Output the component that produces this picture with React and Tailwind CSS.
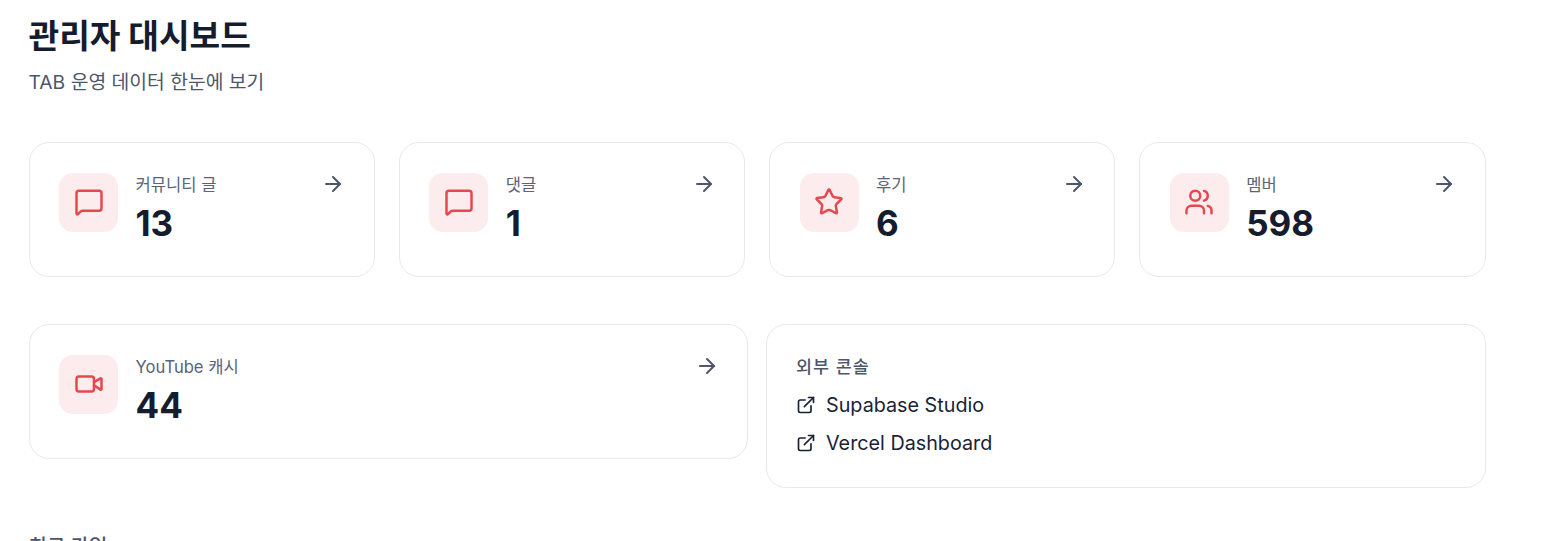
import React from "react";
import { MessageSquare, Star, Users, Video, ArrowRight, ExternalLink } from "lucide-react";

const font = "font-['Inter','Noto_Sans_CJK_KR',sans-serif]";

function Stat({ icon: Icon, label, value }) {
  return (
    <div className="h-[135px] rounded-[20px] border border-[#e8e8f0] bg-white pl-[29.5px] pr-[28.5px] pt-[30px] flex items-start gap-[17.5px]">
      <div className="w-[59px] h-[59px] rounded-[14px] bg-[#fcecee] flex items-center justify-center shrink-0">
        <Icon size={30} strokeWidth={2} className="text-[#e5484d] -mt-[1px]" />
      </div>
      <div className="flex-1 min-w-0">
        <div className="text-[16.6px] leading-[24px] text-[#5a6478]">{label}</div>
        <div className="text-[35px] leading-[44px] font-bold text-[#141c2e] mt-[4px]">{value}</div>
      </div>
      <ArrowRight size={24} strokeWidth={2} className="text-[#4d566b] shrink-0 -mt-[1px]" />
    </div>
  );
}

function Ext({ label }) {
  return (
    <div className="flex items-center gap-[10px] text-[19.75px] leading-[28px] text-[#1a2236]">
      <ExternalLink size={20} strokeWidth={2} className="shrink-0 -mt-[1px]" />
      <span>{label}</span>
    </div>
  );
}

export default function App() {
  return (
    <div className={"h-[541px] overflow-hidden bg-white pl-[28.5px] w-[1485.5px] " + font}>
      <h1 className="text-[33.3px] leading-[44px] font-bold text-[#141c2e] pt-[14px] box-content">관리자 대시보드</h1>
      <p className="text-[19.3px] leading-[28px] text-[#4d566b] mt-[10px]">TAB 운영 데이터 한눈에 보기</p>
      <div className="grid grid-cols-4 gap-[24px] mt-[46px]">
        <Stat icon={MessageSquare} label="커뮤니티 글" value="13" />
        <Stat icon={MessageSquare} label="댓글" value="1" />
        <Stat icon={Star} label="후기" value="6" />
        <Stat icon={Users} label="멤버" value="598" />
      </div>
      <div className="grid grid-cols-[719.5px_1fr] gap-[18px] mt-[47px] items-start">
        <Stat icon={Video} label="YouTube 캐시" value="44" />
        <div className="h-[164px] rounded-[20px] border border-[#e8e8f0] bg-white pl-[29px] pt-[30px]">
          <div className="text-[17.4px] leading-[24px] font-medium tracking-[1px] text-[#4d566b]">외부 콘솔</div>
          <div className="mt-[12px] flex flex-col gap-[10px]">
            <Ext label="Supabase Studio" />
            <Ext label="Vercel Dashboard" />
          </div>
        </div>
      </div>
      <div className="mt-[47px] text-[20px] leading-[24px] font-medium text-[#4d566b]">최근 가입</div>
    </div>
  );
}
